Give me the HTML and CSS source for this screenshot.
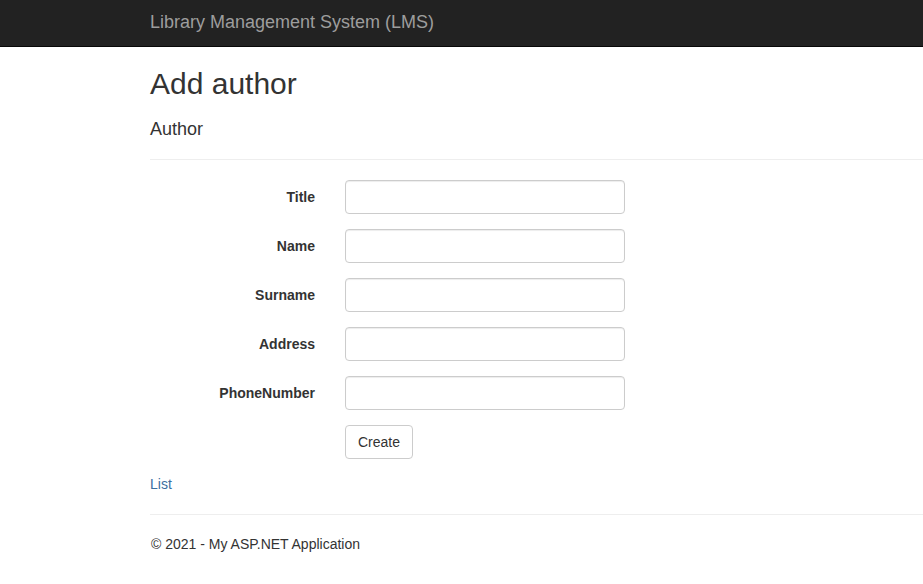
FILE: index.html
```html
<!DOCTYPE html>
<html lang="en">
<head>
<meta charset="utf-8">
<title>Add author - Library Management System (LMS)</title>
<link rel="stylesheet" href="styles.css">
</head>
<body>
  <header class="navbar">
    <div class="container">
      <a class="navbar-brand" href="#">Library Management System (LMS)</a>
    </div>
  </header>
  <main class="container body-content">
    <h2 class="page-title">Add author</h2>
    <form class="form-horizontal">
      <h4 class="section-title">Author</h4>
      <hr class="divider divider-top">
      <div class="form-group">
        <label class="control-label" for="Title">Title</label>
        <div class="control"><input class="form-control" id="Title" type="text"></div>
      </div>
      <div class="form-group">
        <label class="control-label" for="Name">Name</label>
        <div class="control"><input class="form-control" id="Name" type="text"></div>
      </div>
      <div class="form-group">
        <label class="control-label" for="Surname">Surname</label>
        <div class="control"><input class="form-control" id="Surname" type="text"></div>
      </div>
      <div class="form-group">
        <label class="control-label" for="Address">Address</label>
        <div class="control"><input class="form-control" id="Address" type="text"></div>
      </div>
      <div class="form-group">
        <label class="control-label" for="PhoneNumber">PhoneNumber</label>
        <div class="control"><input class="form-control" id="PhoneNumber" type="text"></div>
      </div>
      <div class="form-group">
        <span class="control-label"></span>
        <div class="control"><button type="button" class="btn">Create</button></div>
      </div>
    </form>
    <div class="back-link"><a href="#">List</a></div>
    <hr class="divider">
    <footer class="footer">
      <p>&copy; 2021 - My ASP.NET Application</p>
    </footer>
  </main>
</body>
</html>
```
FILE: styles.css
```css
* {
  box-sizing: border-box;
}

html, body {
  margin: 0;
  padding: 0;
  overflow: hidden;
}

body {
  font-family: "Liberation Sans", Arial, Helvetica, sans-serif;
  font-size: 14px;
  line-height: 1.42857143;
  color: #333;
  background: #fff;
}

.container {
  margin-left: 135px;
  padding: 0 0 0 15px;
}

.navbar {
  background: #222;
  border-bottom: 1px solid #080808;
  height: 47px;
}

.navbar-brand {
  display: block;
  padding: 12px 0 0;
  height: 46px;
  font-size: 18px;
  line-height: 20px;
  color: #9d9d9d;
  text-decoration: none;
}

.page-title {
  font-size: 30px;
  font-weight: 500;
  line-height: 1.1;
  margin: 20px 0 0;
}

.form-horizontal {
  margin: 0;
}

.section-title {
  font-size: 18px;
  font-weight: 500;
  line-height: 1.1;
  margin: 20px 0 0;
  padding: 0;
}

.divider {
  margin: 20px 0;
  border: 0;
  border-top: 1px solid #eee;
  height: 0;
}

.divider-top {
  margin-top: 19px;
}

.form-group {
  display: flex;
  margin: 0 0 15px -15px;
}

.control-label {
  width: 195px;
  flex: none;
  padding: 7px 15px 0;
  text-align: right;
  font-weight: bold;
  line-height: 20px;
}

.control {
  padding: 0 15px;
  flex: 1;
}

.form-control {
  display: block;
  width: 100%;
  max-width: 280px;
  height: 34px;
  padding: 6px 12px;
  font-family: inherit;
  font-size: 14px;
  line-height: 1.42857143;
  color: #555;
  background: #fff;
  border: 1px solid #ccc;
  border-radius: 4px;
  box-shadow: inset 0 1px 1px rgba(0, 0, 0, 0.075);
  margin: 0;
}

.btn {
  display: inline-block;
  height: 34px;
  padding: 6px 12px;
  font-family: inherit;
  font-size: 14px;
  line-height: 1.42857143;
  color: #333;
  background: #fff;
  border: 1px solid #ccc;
  border-radius: 4px;
  margin: 0;
  cursor: pointer;
}

.back-link {
  line-height: 20px;
}

.back-link a {
  color: #3c6f9f;
  text-decoration: none;
}

.footer p {
  margin: -1px 0 10px;
  padding-left: 1px;
  line-height: 20px;
}
```
